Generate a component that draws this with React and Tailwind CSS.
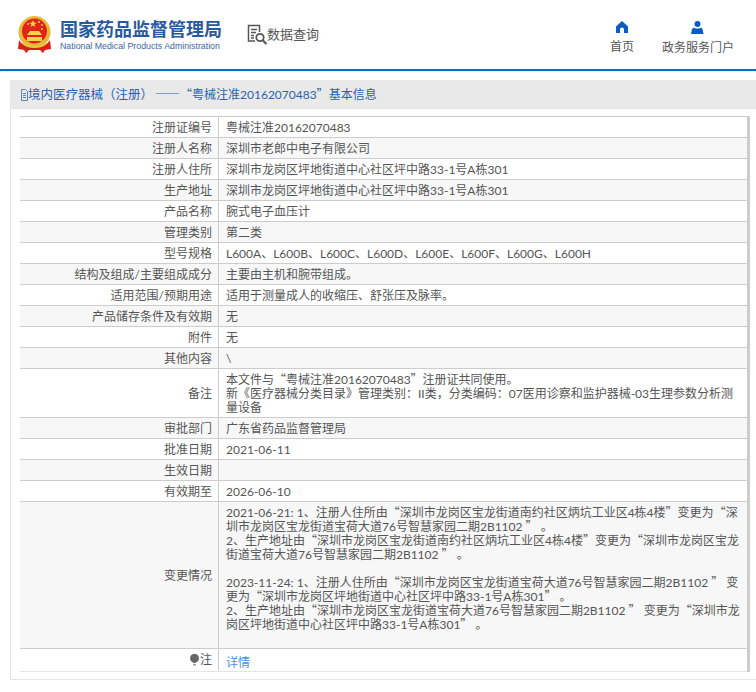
const rows = [
  ['注册证编号', '粤械注准20162070483'],
  ['注册人名称', '深圳市老郎中电子有限公司'],
  ['注册人住所', '深圳市龙岗区坪地街道中心社区坪中路33-1号A栋301'],
  ['生产地址', '深圳市龙岗区坪地街道中心社区坪中路33-1号A栋301'],
  ['产品名称', '腕式电子血压计'],
  ['管理类别', '第二类'],
  ['型号规格', 'L600A、L600B、L600C、L600D、L600E、L600F、L600G、L600H'],
  ['结构及组成/主要组成成分', '主要由主机和腕带组成。'],
  ['适用范围/预期用途', '适用于测量成人的收缩压、舒张压及脉率。'],
  ['产品储存条件及有效期', '无'],
  ['附件', '无'],
  ['其他内容', '\\'],
  ['备注', ['本文件与“粤械注准20162070483”注册证共同使用。', '新《医疗器械分类目录》管理类别：II类，分类编码：07医用诊察和监护器械-03生理参数分析测量设备']],
  ['审批部门', '广东省药品监督管理局'],
  ['批准日期', '2021-06-11'],
  ['生效日期', ''],
  ['有效期至', '2026-06-10'],
  ['变更情况', [
    '2021-06-21: 1、注册人住所由“深圳市龙岗区宝龙街道南约社区炳坑工业区4栋4楼”变更为“深圳市龙岗区宝龙街道宝荷大道76号智慧家园二期2B1102 ” 。',
    '2、生产地址由“深圳市龙岗区宝龙街道南约社区炳坑工业区4栋4楼”变更为“深圳市龙岗区宝龙街道宝荷大道76号智慧家园二期2B1102 ” 。',
    '',
    '2023-11-24: 1、注册人住所由“深圳市龙岗区宝龙街道宝荷大道76号智慧家园二期2B1102 ” 变更为“深圳市龙岗区坪地街道中心社区坪中路33-1号A栋301” 。',
    '2、生产地址由“深圳市龙岗区宝龙街道宝荷大道76号智慧家园二期2B1102 ” 变更为“深圳市龙岗区坪地街道中心社区坪中路33-1号A栋301” 。',
    '',
  ]],
];

// curly quotes have to come from the CJK font to be full width
function Quoted({ text }) {
  return text.split(/([“”])/).map((part, i) =>
    i % 2 === 1
      ? <span key={i} className="font-['Noto_Sans_CJK_SC',sans-serif] leading-[0]">{part}</span>
      : part
  );
}

function Emblem() {
  return (
    <svg width="33" height="38" viewBox="0 0 33 38">
      <circle cx="16.5" cy="16" r="16" fill="#e8b93a" />
      <circle cx="16.5" cy="15" r="12.5" fill="#e2231a" />
      <path d="M15 4l1 2.6 2.7.1-2.1 1.7.7 2.6-2.3-1.5-2.3 1.5.7-2.6-2.1-1.7 2.7-.1z" fill="#f6d34a" />
      <circle cx="10" cy="8" r="1" fill="#f6d34a" />
      <circle cx="21" cy="6" r="1" fill="#f6d34a" />
      <circle cx="24" cy="9" r="1" fill="#f6d34a" />
      <circle cx="24" cy="13" r="1" fill="#f6d34a" />
      <path d="M9 21h15v4H9zM12 15h9l3 4H9z" fill="#f6d34a" />
      <path d="M1 24c3 5 8 7 15.500 7s12.500-2 15.500-7l1 9-6 1-2 3-3-3h-11l-3 3-2-3-6-1z" fill="#d8201a" />
      <path d="M5 27c3 3 7 4 11.500 4s8.500-1 11.500-4" stroke="#f0c23e" strokeWidth="2" fill="none" />
    </svg>
  );
}

function SearchDoc() {
  return (
    <svg width="21" height="21" viewBox="0 0 21 21" fill="none" stroke="#555" strokeWidth="1.5">
      <path d="M8 17H1.500V1.500h11V8" />
      <path d="M4 5.500h6M4 8.500h5M4 11.500h3M4 14h3" />
      <circle cx="13" cy="13.500" r="3.700" strokeWidth="1.800" />
      <path d="M16 16.500l3.500 3.500" strokeWidth="2.200" />
    </svg>
  );
}

function HomeIcon() {
  return (
    <svg width="12" height="12" viewBox="0 0 12 12" fill="#0a5cc0">
      <path d="M6 0l6 5.500V12H8V8.500C8 7.400 7.100 6.500 6 6.500S4 7.400 4 8.500V12H0V5.500z" />
    </svg>
  );
}

function UserIcon() {
  return (
    <svg width="13" height="13" viewBox="0 0 13 13" fill="#0a5cc0">
      <circle cx="6.500" cy="3" r="3" />
      <path d="M3 6.500l1.500 1h4l1.500-1 1.500 1.500 1 5H0l1-5z" />
    </svg>
  );
}

function DocIcon() {
  return (
    <svg width="7" height="12" viewBox="0 0 7 12" fill="none" stroke="#5a86c0" strokeWidth="1">
      <path d="M.5.500h4l2 2v9h-6z" />
      <path d="M2 4.500h3M2 6.500h3M2 8.500h3" />
    </svg>
  );
}

function BulbIcon() {
  return (
    <svg width="9" height="12" viewBox="0 0 9 12" fill="#666">
      <path d="M4.500 0a4.200 4.200 0 0 1 2 8L5.500 9h-2L2.500 8a4.200 4.200 0 0 1 2-8z" />
      <path d="M3 10h3v1.500H3z" fill="#999" />
    </svg>
  );
}

export default function App() {
  return (
    <div lang="zh-CN" className="w-[756px] h-[692px] overflow-hidden bg-white text-[12px] text-[#555] font-['Lato','Noto_Sans_CJK_SC',sans-serif]">
      <header className="h-[71px] border-b-2 border-[#0a6cc0] flex items-center pl-[18px]">
        <Emblem />
        <div className="ml-[9px] mt-[2px] font-['Liberation_Sans','Noto_Sans_CJK_SC',sans-serif]">
          <div className="text-[18px] leading-[22px] font-bold text-[#2a5a9e]">国家药品监督管理局</div>
          <div className="text-[8.8px] leading-[12px] mt-[-1px] text-[#3a66a6]">National Medical Products Administration</div>
        </div>
        <div className="ml-[25px] flex items-center">
          <SearchDoc />
          <span className="text-[13px] text-[#555] ml-[-1px]">数据查询</span>
        </div>
        <nav className="ml-auto flex gap-[28px] pr-[22px] mt-[9px]">
          <div className="flex flex-col items-center gap-[5px]">
            <HomeIcon />
            <span>首页</span>
          </div>
          <div className="flex flex-col items-center gap-[5px]">
            <UserIcon />
            <span>政务服务门户</span>
          </div>
        </nav>
      </header>
      <div className="h-[9px] border-t border-dotted border-[#cfe0f0]" />
      <main className="ml-[10px] w-[750px]">
        <div className="h-[28px] bg-[#e9e9e9] flex items-center pl-[11px] pt-[2px] text-[12.5px] text-[#2a62ad]">
          <DocIcon />
          <span>境内医疗器械（注册）<span className="font-['Noto_Sans_CJK_SC',sans-serif] font-medium leading-[0] ml-[2px]">——</span><span className="text-[12px]"><Quoted text="“粤械注准20162070483”" />基本信息</span></span>
        </div>
        <div className="border border-[#e4e4e4] pl-[9px] pr-[9px] pt-[7px] pb-[7px]">
          <div className="border-t border-r-[3px] border-[#ccc]">
            {rows.map(([label, value], i) => (
              <div key={label} className={`flex border-b border-[#ccc] leading-[14px] ${i % 2 ? 'bg-[#f7f7f7]' : 'bg-white'}`}>
                <div className="w-[199px] shrink-0 flex items-center justify-end pr-[6px] pt-[1px] border-r border-[#ccc] min-h-[20px]">{label}</div>
                {Array.isArray(value) ? (
                  <div className="flex-1 pl-[7px] pr-[6px] pt-[4px] pb-[2px]">
                    {value.map((line, j) => <div key={j} className="min-h-[14px]"><Quoted text={line} /></div>)}
                  </div>
                ) : (
                  <div className="flex-1 pl-[7px] pr-[6px] pt-[4px] pb-[2px] min-h-[20px]">{value}</div>
                )}
              </div>
            ))}
            <div className="flex leading-[20px] border-b border-[#e4e4e4] h-[23px]">
              <div className="w-[199px] shrink-0 flex items-center justify-end gap-[1px] pr-[6px] border-r border-[#ccc]">
                <BulbIcon />注
              </div>
              <a className="pl-[7px] pt-[4px] text-[#4a90e8]">详情</a>
            </div>
          </div>
        </div>
      </main>
    </div>
  );
}
